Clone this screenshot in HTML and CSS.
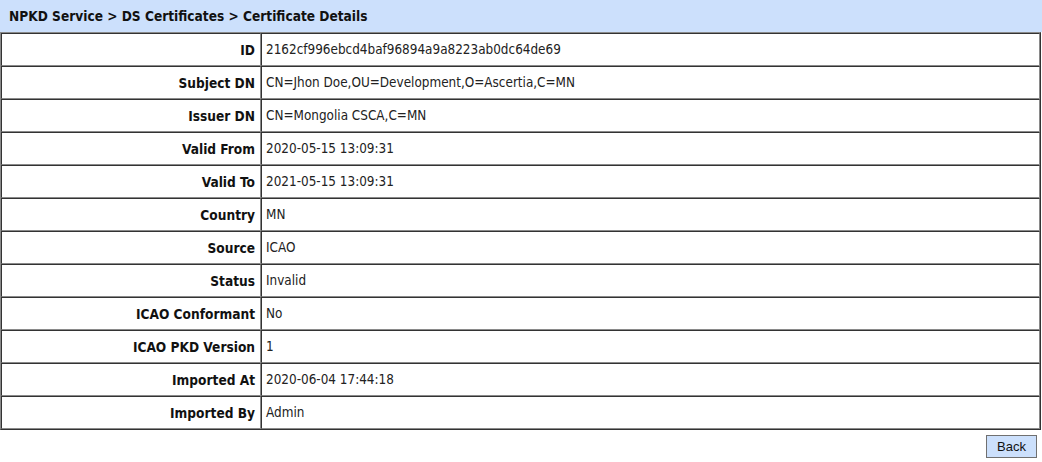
FILE: index.html
```html
<!DOCTYPE html>
<html>
<head>
<meta charset="utf-8">
<link rel="stylesheet" href="styles.css">
</head>
<body>
<div class="crumb">NPKD Service &gt; DS Certificates &gt; Certificate Details</div>
<table class="details">
  <tr><th>ID</th><td>2162cf996ebcd4baf96894a9a8223ab0dc64de69</td></tr>
  <tr><th>Subject DN</th><td>CN=Jhon Doe,OU=Development,O=Ascertia,C=MN</td></tr>
  <tr><th>Issuer DN</th><td>CN=Mongolia CSCA,C=MN</td></tr>
  <tr><th>Valid From</th><td>2020-05-15 13:09:31</td></tr>
  <tr><th>Valid To</th><td>2021-05-15 13:09:31</td></tr>
  <tr><th>Country</th><td>MN</td></tr>
  <tr><th>Source</th><td>ICAO</td></tr>
  <tr><th>Status</th><td>Invalid</td></tr>
  <tr><th>ICAO Conformant</th><td>No</td></tr>
  <tr><th>ICAO PKD Version</th><td>1</td></tr>
  <tr><th>Imported At</th><td>2020-06-04 17:44:18</td></tr>
  <tr><th>Imported By</th><td>Admin</td></tr>
</table>
<div class="actions"><button class="btn">Back</button></div>
</body>
</html>
```
FILE: styles.css
```css
html, body {
  margin: 0;
  padding: 0;
  background: #ffffff;
}
body {
  font-family: "DejaVu Sans Condensed", "DejaVu Sans", sans-serif;
  font-size: 13px;
  color: #000;
}
.crumb {
  height: 32px;
  line-height: 33px;
  background: #cce0fc;
  padding-left: 9px;
  font-weight: bold;
  font-size: 13.6px;
  color: #111;
}
.details {
  width: 1041px;
  border-collapse: separate;
  border-spacing: 0;
  border: 1px solid;
  border-color: #8a8a8a #333 #333 #8a8a8a;
  margin-left: 0;
}
.details th,
.details td {
  height: 33px;
  padding: 0;
  border: 1px solid;
  border-color: #333 #8a8a8a #8a8a8a #333;
  font-size: 13.4px;
  box-sizing: border-box;
}
.details th {
  width: 260px;
  text-align: right;
  padding-right: 5px;
  font-weight: bold;
  font-size: 13.6px;
  color: #111;
}
.details td {
  text-align: left;
  padding-left: 4px;
  color: #222;
}
.actions {
  display: flex;
  justify-content: flex-end;
  padding: 5px 5px 0 0;
}
.btn {
  font-family: "Liberation Sans", Arial, sans-serif;
  font-size: 13px;
  width: 51px;
  height: 23px;
  background: #cce0fc;
  border: 1px solid #707070;
  color: #111;
  padding: 0;
}
```
